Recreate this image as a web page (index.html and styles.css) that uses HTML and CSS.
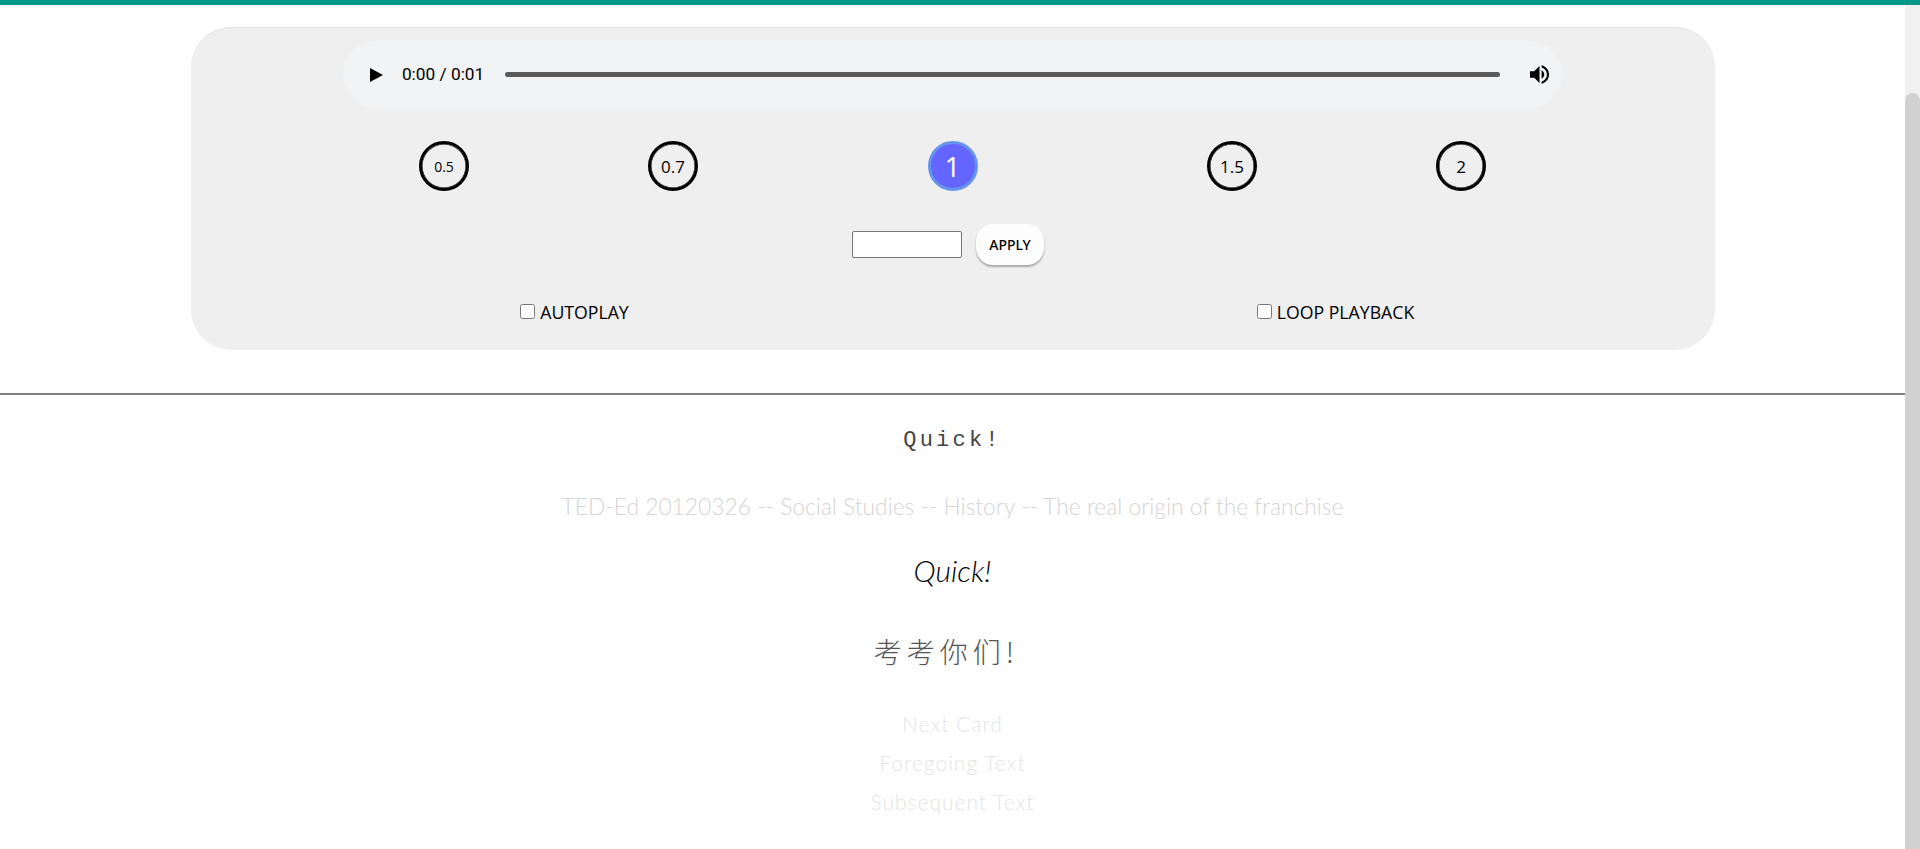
FILE: index.html
```html
<!DOCTYPE html>
<html lang="en">
<head>
    <meta charset="UTF-8">
    <title>Flash Cards</title>
    <link rel="stylesheet" href="styles.css">
</head>
<body>
    <div class="top-bar"></div>
    <div class="page">
        <main class="content">
            <!-- Player Panel -->
            <section class="panel">
                <div class="player">
                    <svg class="play-icon" viewBox="0 0 13 14"><polygon points="0,0 13,7 0,14"/></svg>
                    <span class="time">0:00 / 0:01</span>
                    <div class="track"></div>
                    <svg class="volume-icon" viewBox="3 3 18 18"><path d="M3 9v6h4l5 5V4L7 9H3zm13.5 3c0-1.77-1.02-3.29-2.5-4.03v8.05c1.48-.73 2.5-2.25 2.5-4.02zM14 3.23v2.06c2.89.86 5 3.54 5 6.71s-2.11 5.85-5 6.71v2.06c4.01-.91 7-4.49 7-8.77s-2.99-7.86-7-8.77z"/></svg>
                </div>

                <div class="speeds">
                    <div class="speed"><button class="circle circle-small">0.5</button></div>
                    <div class="speed"><button class="circle">0.7</button></div>
                    <div class="speed"><button class="circle circle-active">1</button></div>
                    <div class="speed"><button class="circle">1.5</button></div>
                    <div class="speed"><button class="circle">2</button></div>
                </div>

                <div class="custom-speed">
                    <input type="text" class="speed-input">
                    <button class="apply">APPLY</button>
                </div>

                <div class="options">
                    <label class="option"><input type="checkbox"> AUTOPLAY</label>
                    <label class="option"><input type="checkbox"> LOOP PLAYBACK</label>
                </div>
            </section>

            <hr class="divider">

            <!-- Card Text -->
            <div class="card">
                <p class="line-mono">Quick!</p>
                <p class="line-source">TED-Ed 20120326 -- Social Studies -- History -- The real origin of the franchise</p>
                <p class="line-main">Quick!</p>
                <p class="line-cjk">考考你们!</p>
                <p class="line-link line-next">Next Card</p>
                <p class="line-link">Foregoing Text</p>
                <p class="line-link">Subsequent Text</p>
            </div>
        </main>

        <div class="scrollbar"><div class="scroll-thumb"></div></div>
    </div>
</body>
</html>
```

FILE: styles.css
```css
html, body {
    height: 100%;
}

body {
    margin: 0;
    overflow: hidden;
    display: flex;
    flex-direction: column;
    background-color: #fff;
    color: #000;
    font-family: "Open Sans", Arial, sans-serif;
}

.top-bar {
    height: 5px;
    flex: none;
    background-color: #009688;
}

.page {
    flex: 1;
    display: flex;
    min-height: 0;
}

.content {
    flex: 1;
    min-width: 0;
}

/* Scrollbar */
.scrollbar {
    width: 15px;
    flex: none;
    display: flex;
    padding-top: 88px;
    box-sizing: border-box;
    background-color: #f1f1f1;
}

.scroll-thumb {
    flex: 1;
    background-color: #d1d1d1;
    border-radius: 8px 8px 0 0;
}

/* Panel */
.panel {
    width: 80%;
    box-sizing: border-box;
    margin: 22px auto 0;
    padding: 13px 0 26px;
    background-color: #efefef;
    border-top: 1px solid #e2e2e2;
    border-radius: 40px;
}

.player {
    width: 80%;
    height: 67px;
    margin: 0 auto;
    padding: 0 13px 0 27px;
    box-sizing: border-box;
    display: flex;
    align-items: center;
    background-color: #f1f3f4;
    border-radius: 34px;
}

.play-icon {
    width: 13px;
    height: 14px;
    flex: none;
}

.time {
    margin-left: 19px;
    margin-bottom: 1px;
    font-family: Roboto, Arial, sans-serif;
    font-size: 17.3px;
    white-space: nowrap;
}

.track {
    flex: 1;
    height: 5px;
    margin: 0 30px 0 21px;
    background-color: #5b5b5b;
    border-radius: 3px;
}

.volume-icon {
    width: 19px;
    height: 19px;
    flex: none;
}

/* Speed Buttons */
.speeds {
    display: grid;
    grid-template-columns: 229px 229px 330px 229px 229px;
    justify-content: center;
    margin-top: 33px;
}

.speed {
    display: flex;
    justify-content: center;
}

.circle {
    width: 50px;
    height: 50px;
    padding: 0;
    border: 3px solid #000;
    border-radius: 50%;
    background: none;
    box-shadow: inset 0 0 0 0.5px #000;
    color: #000;
    font-family: "Open Sans", Arial, sans-serif;
    font-size: 17px;
}

.circle-small {
    font-size: 14px;
}

.circle-active {
    border-color: #6495ed;
    background-color: #6464ff;
    box-shadow: none;
    color: #fff;
    font-size: 28px;
}

/* Custom Speed */
.custom-speed {
    display: flex;
    justify-content: center;
    align-items: center;
    gap: 14px;
    margin-top: 33px;
    padding-right: 9px;
}

.speed-input {
    width: 110px;
    height: 27px;
    padding: 0;
    box-sizing: border-box;
    border: 1px solid #767676;
    border-radius: 2px;
    background-color: #fff;
}

.apply {
    width: 68px;
    height: 41px;
    padding: 0;
    border: none;
    border-radius: 17px;
    background-color: #fdfdfd;
    box-shadow: 0 2px 2px rgba(0, 0, 0, 0.3);
    color: #000;
    font-family: "Noto Sans", Arial, sans-serif;
    font-size: 14px;
    font-weight: 500;
}

/* Options */
.options {
    display: grid;
    grid-template-columns: 1fr 1fr;
    column-gap: 3px;
    margin-top: 35px;
    padding-left: 5px;
}

.option {
    display: flex;
    justify-content: center;
    align-items: center;
    gap: 5px;
    height: 24px;
    font-size: 17.7px;
}

.option input {
    width: 15px;
    height: 15px;
    margin: 0 0 2px;
}

.divider {
    height: 2px;
    margin: 43px 0 0;
    border: none;
    background-color: #808080;
}

/* Card Text */
.card {
    text-align: center;
}

.card p {
    margin: 0;
}

.line-mono {
    margin-top: 29px !important;
    line-height: 34px;
    font-family: "Liberation Mono", monospace;
    font-size: 22px;
    letter-spacing: 3.2px;
    color: #444;
}

.line-source {
    margin-top: 33px !important;
    line-height: 30px;
    font-family: Lato, sans-serif;
    font-size: 22.8px;
    font-weight: 300;
    color: #d4d4d4;
}

.line-main {
    margin-top: 29px !important;
    line-height: 40px;
    font-family: Lato, sans-serif;
    font-size: 30px;
    font-weight: 300;
    font-style: italic;
}

.line-cjk {
    margin-top: 41px !important;
    padding-right: 12px;
    line-height: 40px;
    font-family: "Noto Sans CJK SC", sans-serif;
    font-size: 28px;
    font-weight: 300;
    letter-spacing: 5px;
    color: #555;
}

.line-link {
    margin-top: 9px !important;
    line-height: 30px;
    font-family: Lato, sans-serif;
    font-size: 21px;
    font-weight: 300;
    letter-spacing: 1px;
    color: #e4e4e4;
}

.line-next {
    margin-top: 38px !important;
}
```
